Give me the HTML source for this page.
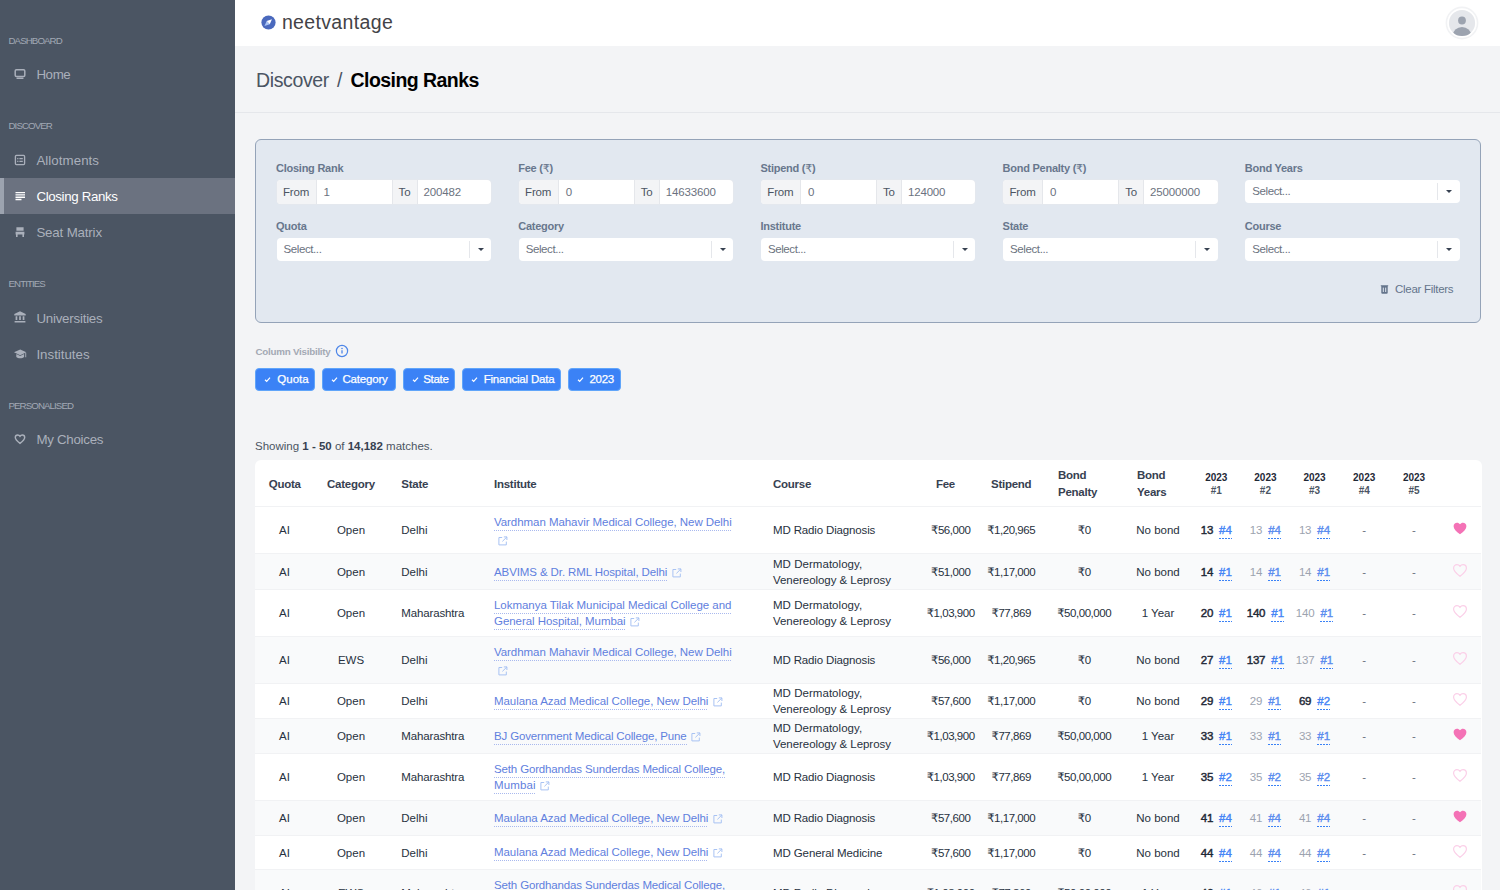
<!DOCTYPE html>
<html lang="en">
<head>
<meta charset="utf-8">
<title>neetvantage - Closing Ranks</title>
<style>
*{box-sizing:border-box;margin:0;padding:0}
html,body{width:1500px;height:890px;overflow:hidden;background:#f3f4f6;font-family:"Liberation Sans","DejaVu Sans",sans-serif;color:#1f2937}
body{position:relative}
svg{display:block}
/* sidebar */
.sb{position:absolute;left:0;top:0;width:235px;height:890px;background:#4b5563}
.sb .lab{position:absolute;left:8.5px;margin-top:1px;font-size:9.7px;color:#a2a9b5;letter-spacing:-.9px;line-height:12px;white-space:nowrap}
.sb .it{position:absolute;left:0;width:235px;height:36px;color:#aab0bb;font-size:13.3px;line-height:38px;padding-left:36.4px;white-space:nowrap}
.sb .it svg{position:absolute;left:14px;top:12px}
.sb .it.on{background:#6b7280;color:#fff;border-left:4px solid #9ca3af;padding-left:32.4px}
.sb .it.on svg{left:10px}
/* topbar */
.tb{position:absolute;left:235px;top:0;width:1265px;height:46px;background:#fff}
.logo{position:absolute;left:46.9px;top:9px;font-size:19.5px;letter-spacing:.35px;line-height:26px;color:#434347;white-space:nowrap}
.logoi{position:absolute;left:26.2px;top:15.100px}
.av{position:absolute;left:1209.9px;top:5.700px}
/* title */
.ttl{position:absolute;left:235px;top:46px;width:1265px;height:67px;border-bottom:1px solid #e5e7eb;background:#f3f4f6}
.ttl div{position:absolute;left:21px;top:21px;font-size:19.5px;line-height:26px;color:#4b5563;white-space:nowrap}
.ttl b{color:#000;position:absolute;left:94.500px;top:0;letter-spacing:-.55px}
.ttl span{letter-spacing:-.36px}
.ttl i{position:absolute;left:81px;top:0;font-style:normal}

/* filters */
.fp{position:absolute;left:255px;top:139px;width:1226px;height:184px;background:#e2e8f0;border:1px solid #94a3b8;border-radius:6px}
.fl{position:absolute;font-size:11px;font-weight:bold;letter-spacing:-.25px;color:#68778d;line-height:14px;white-space:nowrap}
.ig{position:absolute;width:214.6px;height:24px;border-radius:4px;background:#fff;overflow:hidden;font-size:11.5px;line-height:24px;color:#6b7280;white-space:nowrap;box-shadow:0 0 0 .5px #e5e7eb}
.ig i{position:absolute;top:0;height:24px;font-style:normal;letter-spacing:-.15px}
.ig .a{background:#f3f4f6;color:#4b5563;text-align:center;border-right:1px solid #e5e7eb}
.ig .a2{border-left:1px solid #e5e7eb}
.se{position:absolute;width:214.6px;height:23px;border-radius:4px;background:#fff;font-size:11.5px;letter-spacing:-.4px;line-height:23px;color:#6b7280;padding-left:7px;white-space:nowrap}
.se:before{content:"";position:absolute;left:192px;top:3px;width:1px;height:17px;background:#e5e7eb}
.se:after{content:"";position:absolute;left:201px;top:10px;border:3px solid transparent;border-top:3.5px solid #374151;border-bottom:0}
.cf{position:absolute;left:1395px;top:282px;font-size:11.5px;letter-spacing:-.28px;line-height:14px;color:#64748b;white-space:nowrap}
.cfi{position:absolute;left:1380px;top:284px}
/* column visibility */
.cv{position:absolute;left:255.5px;top:346px;font-size:9.8px;font-weight:bold;letter-spacing:-.25px;color:#a3a9b4;line-height:12px;white-space:nowrap}
.cvi{position:absolute;left:334.600px;top:343.500px}
.ch{position:absolute;top:368.3px;-webkit-text-stroke:.25px #fff;height:23px;border-radius:4px;background:#3b82f6;border:1px solid #60a5fa;color:#fff;font-size:11.5px;line-height:21px;white-space:nowrap;padding-left:21px}
.ch svg{position:absolute;left:8px;top:6.700px}
.sh{position:absolute;left:255px;top:438px;font-size:11.5px;line-height:16px;color:#4b5563;white-space:nowrap}
.sh b{color:#374151}
/* table */
.tw{position:absolute;left:255px;top:460px;width:1226.5px;height:460px;background:#fff;border-radius:6px;overflow:hidden;font-size:11.5px;line-height:16px;color:#273140}
.r{position:absolute;left:0;width:1226px;border-top:1px solid #f1f2f4}
.r.e{background:#f9fafb}
.c{position:absolute;top:0;height:100%;padding-top:.6px;display:flex;align-items:center;white-space:nowrap}
.m{justify-content:center;text-align:center}
.hd{font-weight:bold;color:#374151;letter-spacing:-.25px;line-height:16.5px;padding-top:1.6px}
.hd.hy{font-size:10px;line-height:12.6px;color:#1f2937;letter-spacing:0;padding-top:3.6px}
.hy span{color:#4b5563}
.c a{color:#5f80de;text-decoration:none;background:linear-gradient(90deg,#a9b9ee 1px,transparent 1px) 0 100%/2px 1px repeat-x;padding-bottom:3px}
.xl{display:inline-block;vertical-align:-2px;margin-left:4.300px}
.xl.x2{vertical-align:-3.500px;margin-left:4px}
.rk b{color:#1f2937;letter-spacing:-.2px;font-weight:normal;-webkit-text-stroke:.45px #1f2937}
.rk span{position:relative;top:0}
.n{letter-spacing:-.45px}
.in{line-height:16.5px}
.in>div{position:relative;top:-.2px}
.rk.g b{color:#9ca3af;font-weight:normal;-webkit-text-stroke:0}
.rk u{color:#4585f6;font-weight:normal;-webkit-text-stroke:.4px #4585f6;text-decoration:none;margin-left:6px;background:linear-gradient(90deg,#3b82f6 2px,transparent 2px) 0 100%/3px 1px repeat-x;padding-bottom:3px}
.rk.g u{color:#5b8def;-webkit-text-stroke:.4px #5b8def}
.d{color:#6b7280}
.ht{position:absolute;left:1198px}
</style>
</head>
<body>
<div class="sb">
  <div class="lab" style="top:34px">DASHBOARD</div>
  <div class="it" style="top:56px;letter-spacing:-0.37px"><svg width="12" height="12" viewBox="0 0 12 12"><rect x="1.2" y="1.7" width="9.6" height="6.8" rx="1.2" fill="none" stroke="#aab0bb" stroke-width="1.5"/><rect x="2.5" y="9.6" width="7" height="1.4" rx=".5" fill="#aab0bb"/></svg>Home</div>
  <div class="lab" style="top:119px">DISCOVER</div>
  <div class="it" style="top:142px;letter-spacing:0.06px"><svg width="12" height="12" viewBox="0 0 12 12"><rect x="1.4" y="1.4" width="9.2" height="9.2" rx="1" fill="none" stroke="#aab0bb" stroke-width="1.3"/><path d="M3.2 4.6h1.2M5.4 4.6h3.4M3.2 7.4h1.2M5.4 7.4h3.4" stroke="#aab0bb" stroke-width="1.2"/></svg>Allotments</div>
  <div class="it on" style="top:178px;letter-spacing:-0.35px"><svg width="12" height="12" viewBox="0 0 12 12"><path d="M1.5 2.6h9.5M1.5 4.9h9.5M1.5 7.2h9.5M1.5 9.5h6" stroke="#fff" stroke-width="1.4"/></svg>Closing Ranks</div>
  <div class="it" style="top:214px;letter-spacing:-0.16px"><svg width="12" height="12" viewBox="0 0 12 12"><path d="M2.4 1.2h7.2v3.6H2.4zM1.6 5.8h8.8v2.6H1.6zM2 8.4h1.6v2.6H2zM8.4 8.4H10v2.6H8.4z" fill="#aab0bb"/></svg>Seat Matrix</div>
  <div class="lab" style="top:277px">ENTITIES</div>
  <div class="it" style="top:300px;letter-spacing:-0.22px"><svg style="top:11.3px" width="12" height="12" viewBox="0 0 12 12"><path d="M6 .3l5.700 2.800v1.300H.3V3.100zM1.600 5.200h1.700v3.900H1.600zM5.150 5.200h1.700v3.900h-1.700zM8.700 5.200h1.700v3.900H8.700zM.6 9.900h10.800v1.500H.6z" fill="#aab0bb"/></svg>Universities</div>
  <div class="it" style="top:336px;letter-spacing:0px"><svg style="top:12.500px" width="13" height="11" viewBox="0 0 13 11"><path d="M6.200.4l6.200 2.900-6.200 2.900L0 3.300zM2.300 5.100l3.900 1.800 3.900-1.800v2.800c-1.600 1.900-6.200 1.900-7.800 0zM11.300 4.100h.9v4.200h-.9z" fill="#aab0bb"/></svg>Institutes</div>
  <div class="lab" style="top:399px">PERSONALISED</div>
  <div class="it" style="top:421px;letter-spacing:-0.27px"><svg width="12" height="12" viewBox="0 0 12 12"><path d="M6 10.4C3.2 8.2 1.3 6.6 1.3 4.5 1.3 3 2.4 2 3.7 2c.9 0 1.8.5 2.3 1.3C6.500 2.500 7.400 2 8.300 2c1.300 0 2.400 1 2.400 2.500 0 2.100-1.900 3.700-4.700 5.900z" fill="none" stroke="#aab0bb" stroke-width="1.4"/></svg>My Choices</div>
</div>

<div class="tb">
  <svg class="logoi" width="15" height="15" viewBox="0 0 15 15"><circle cx="7.500" cy="7.500" r="7.100" fill="#4a69bd"/><path d="M3.450 11L8.800 9.300 5.700 5.900z" fill="#a9c4f5"/><path d="M10.950 4.200L8.800 9.300 5.700 5.900z" fill="#fff"/></svg>
  <div class="logo">neetvantage</div>
  <svg class="av" width="34" height="34" viewBox="0 0 34 34"><circle cx="17" cy="17" r="15.600" fill="#fff" stroke="#f1f2f4" stroke-width="1.600"/><circle cx="17" cy="17" r="13.100" fill="#e5e7eb"/><clipPath id="avc"><circle cx="17" cy="17" r="13.100"/></clipPath><circle cx="17" cy="14.500" r="3.900" fill="#9ca3af"/><ellipse cx="17" cy="29.500" rx="9.300" ry="8.600" fill="#9ca3af" clip-path="url(#avc)"/></svg>
</div>
<div class="ttl"><div><span>Discover</span><i>/</i><b>Closing Ranks</b></div></div>
<div class="fp"></div>
<div class="fl" style="left:276.0px;top:161px">Closing Rank</div>
<div class="ig" style="left:276.5px;top:179.7px"><i class="a" style="left:0;width:40px">From</i><i style="left:47px">1</i><i class="a a2" style="left:115px;width:26px">To</i><i style="left:147px">200482</i></div>
<div class="fl" style="left:276.0px;top:218.500px">Quota</div>
<div class="se" style="left:276.5px;top:237.7px">Select...</div>
<div class="fl" style="left:518.2px;top:161px">Fee (<span style="font-weight:normal">₹</span>)</div>
<div class="ig" style="left:518.7px;top:179.7px"><i class="a" style="left:0;width:40px">From</i><i style="left:47px">0</i><i class="a a2" style="left:115px;width:26px">To</i><i style="left:147px">14633600</i></div>
<div class="fl" style="left:518.2px;top:218.500px">Category</div>
<div class="se" style="left:518.7px;top:237.7px">Select...</div>
<div class="fl" style="left:760.4px;top:161px">Stipend (<span style="font-weight:normal">₹</span>)</div>
<div class="ig" style="left:760.9px;top:179.7px"><i class="a" style="left:0;width:40px">From</i><i style="left:47px">0</i><i class="a a2" style="left:115px;width:26px">To</i><i style="left:147px">124000</i></div>
<div class="fl" style="left:760.4px;top:218.500px">Institute</div>
<div class="se" style="left:760.9px;top:237.7px">Select...</div>
<div class="fl" style="left:1002.6px;top:161px">Bond Penalty (<span style="font-weight:normal">₹</span>)</div>
<div class="ig" style="left:1003.1px;top:179.7px"><i class="a" style="left:0;width:40px">From</i><i style="left:47px">0</i><i class="a a2" style="left:115px;width:26px">To</i><i style="left:147px">25000000</i></div>
<div class="fl" style="left:1002.6px;top:218.500px">State</div>
<div class="se" style="left:1003.1px;top:237.7px">Select...</div>
<div class="fl" style="left:1244.8px;top:161px">Bond Years</div>
<div class="se" style="left:1245.3px;top:180px">Select...</div>
<div class="fl" style="left:1244.8px;top:218.500px">Course</div>
<div class="se" style="left:1245.3px;top:237.7px">Select...</div>
<svg class="cfi" width="9" height="10" viewBox="0 0 9 10"><path d="M.8 1.200h7.400v1H.8zM1.300 2.200h6.400v6.600a1 1 0 0 1-1 1H2.300a1 1 0 0 1-1-1z" fill="#64748b"/><path d="M3.300 3.600v4.400M5.700 3.600v4.400" stroke="#e2e8f0" stroke-width="1"/></svg>
<div class="cf">Clear Filters</div>
<div class="cv">Column Visibility</div>
<svg class="cvi" width="14" height="14" viewBox="0 0 14 14"><circle cx="7" cy="7" r="5.600" fill="none" stroke="#4d86e8" stroke-width="1.200"/><path d="M7 6.300v3.300" stroke="#4d86e8" stroke-width="1.300"/><circle cx="7" cy="4.500" r=".8" fill="#4d86e8"/></svg>
<div class="ch" style="left:255px;width:60px;padding-left:21.3px;letter-spacing:0px"><svg width="7" height="7" viewBox="0 0 7 7"><path d="M1 3.800l1.700 1.600L6 1.600" fill="none" stroke="#fff" stroke-width="1.200"/></svg>Quota</div>
<div class="ch" style="left:322px;width:74px;padding-left:19.5px;letter-spacing:-0.2px"><svg width="7" height="7" viewBox="0 0 7 7"><path d="M1 3.800l1.700 1.600L6 1.600" fill="none" stroke="#fff" stroke-width="1.200"/></svg>Category</div>
<div class="ch" style="left:402.5px;width:52.5px;padding-left:19.7px;letter-spacing:-0.3px"><svg width="7" height="7" viewBox="0 0 7 7"><path d="M1 3.800l1.700 1.600L6 1.600" fill="none" stroke="#fff" stroke-width="1.200"/></svg>State</div>
<div class="ch" style="left:461.7px;width:99.6px;padding-left:21px;letter-spacing:-.2px"><svg width="7" height="7" viewBox="0 0 7 7"><path d="M1 3.800l1.700 1.600L6 1.600" fill="none" stroke="#fff" stroke-width="1.200"/></svg>Financial Data</div>
<div class="ch" style="left:568px;width:52.5px;padding-left:20.500px;letter-spacing:-.3px"><svg width="7" height="7" viewBox="0 0 7 7"><path d="M1 3.800l1.700 1.600L6 1.600" fill="none" stroke="#fff" stroke-width="1.200"/></svg>2023</div>
<div class="sh">Showing <b>1 - 50</b> of <b>14,182</b> matches.</div>
<!--TABLE-->
<div class="tw">
<div class="r" style="top:0;height:46px;border-top:0">
<div class="c m hd" style="left:-5.3px;width:70px">Quota</div>
<div class="c m hd" style="left:61px;width:70px">Category</div>
<div class="c hd" style="left:146.3px;width:300px">State</div>
<div class="c hd" style="left:239px;width:300px">Institute</div>
<div class="c hd" style="left:518px;width:300px">Course</div>
<div class="c m hd" style="left:655.5px;width:70px">Fee</div>
<div class="c m hd" style="left:721.2px;width:70px">Stipend</div>
<div class="c hd" style="left:803px;width:60px">Bond<br>Penalty</div>
<div class="c hd" style="left:882px;width:60px">Bond<br>Years</div>
<div class="c m hd hy" style="left:937.3px;width:48px"><div>2023<br><span>#1</span></div></div>
<div class="c m hd hy" style="left:986.4px;width:48px"><div>2023<br><span>#2</span></div></div>
<div class="c m hd hy" style="left:1035.5px;width:48px"><div>2023<br><span>#3</span></div></div>
<div class="c m hd hy" style="left:1085.2px;width:48px"><div>2023<br><span>#4</span></div></div>
<div class="c m hd hy" style="left:1135px;width:48px"><div>2023<br><span>#5</span></div></div>
</div>
<div class="r" style="top:46px;height:47px">
<div class="c m" style="left:-5.5px;width:70px">AI</div>
<div class="c m" style="left:61px;width:70px">Open</div>
<div class="c" style="left:146.3px;width:90px">Delhi</div>
<div class="c in" style="left:239px;width:270px"><div><a style="letter-spacing:-0.056px">Vardhman Mahavir Medical College, New Delhi</a><br><svg class="xl x2" width="10" height="10" viewBox="0 0 10 10"><path d="M4.200 1.500H.9v7.400h7.400V5.600M9 .8L4.400 5.400M5.800.9h3.100v3.100" fill="none" stroke="#a8c3f3" stroke-width="1"/></svg></div></div>
<div class="c co" style="left:518px;width:150px"><div><span style="letter-spacing:-0.146px">MD Radio Diagnosis</span></div></div>
<div class="c m n" style="left:660.7px;width:70px">₹56,000</div>
<div class="c m n" style="left:721.2px;width:70px">₹1,20,965</div>
<div class="c m n" style="left:794.2px;width:70px">₹0</div>
<div class="c m" style="left:868px;width:70px">No bond</div>
<div class="c m rk" style="left:937.3px;width:48px"><span><b>13</b><u>#4</u></span></div>
<div class="c m rk g" style="left:986.4px;width:48px"><span><b>13</b><u>#4</u></span></div>
<div class="c m rk g" style="left:1035.5px;width:48px"><span><b>13</b><u>#4</u></span></div>
<div class="c m d" style="left:1085.2px;width:48px">-</div>
<div class="c m d" style="left:1135px;width:48px">-</div>
<svg class="ht" style="top:15.0px" width="14" height="13" viewBox="0 0 14 13"><path d="M7 12.300C3 9.200.6 7 .6 4.200.6 2.200 2.100.7 4 .7c1.200 0 2.300.6 3 1.600C7.700 1.300 8.800.7 10 .7c1.900 0 3.400 1.500 3.400 3.500 0 2.800-2.400 5-6.400 8.100z" fill="#f472b6"/></svg>
</div>
<div class="r e" style="top:93px;height:36px">
<div class="c m" style="left:-5.5px;width:70px">AI</div>
<div class="c m" style="left:61px;width:70px">Open</div>
<div class="c" style="left:146.3px;width:90px">Delhi</div>
<div class="c in" style="left:239px;width:270px;padding-top:1.8px"><div><a style="letter-spacing:-0.103px">ABVIMS &amp; Dr. RML Hospital, Delhi</a><svg class="xl" width="10" height="10" viewBox="0 0 10 10"><path d="M4.200 1.500H.9v7.400h7.400V5.600M9 .8L4.400 5.400M5.800.9h3.100v3.100" fill="none" stroke="#a8c3f3" stroke-width="1"/></svg></div></div>
<div class="c co" style="left:518px;width:150px"><div><span style="letter-spacing:0.038px">MD Dermatology,</span><br><span style="letter-spacing:-0.049px">Venereology &amp; Leprosy</span></div></div>
<div class="c m n" style="left:660.7px;width:70px">₹51,000</div>
<div class="c m n" style="left:721.2px;width:70px">₹1,17,000</div>
<div class="c m n" style="left:794.2px;width:70px">₹0</div>
<div class="c m" style="left:868px;width:70px">No bond</div>
<div class="c m rk" style="left:937.3px;width:48px"><span><b>14</b><u>#1</u></span></div>
<div class="c m rk g" style="left:986.4px;width:48px"><span><b>14</b><u>#1</u></span></div>
<div class="c m rk g" style="left:1035.5px;width:48px"><span><b>14</b><u>#1</u></span></div>
<div class="c m d" style="left:1085.2px;width:48px">-</div>
<div class="c m d" style="left:1135px;width:48px">-</div>
<svg class="ht" style="top:9.5px" width="14" height="13" viewBox="0 0 14 13"><path d="M7 12.300C3 9.200.6 7 .6 4.200.6 2.200 2.100.7 4 .7c1.200 0 2.300.6 3 1.600C7.700 1.300 8.800.7 10 .7c1.900 0 3.400 1.500 3.400 3.500 0 2.800-2.400 5-6.400 8.100z" fill="none" stroke="#fbcfe8" stroke-width="1.200"/></svg>
</div>
<div class="r" style="top:129px;height:47px">
<div class="c m" style="left:-5.5px;width:70px">AI</div>
<div class="c m" style="left:61px;width:70px">Open</div>
<div class="c" style="left:146.3px;width:90px"><span style="letter-spacing:-0.14px">Maharashtra</span></div>
<div class="c in" style="left:239px;width:270px"><div><a style="letter-spacing:-0.038px">Lokmanya Tilak Municipal Medical College and</a><br><a style="letter-spacing:-0.056px">General Hospital, Mumbai</a><svg class="xl" width="10" height="10" viewBox="0 0 10 10"><path d="M4.200 1.500H.9v7.400h7.400V5.600M9 .8L4.400 5.400M5.800.9h3.100v3.100" fill="none" stroke="#a8c3f3" stroke-width="1"/></svg></div></div>
<div class="c co" style="left:518px;width:150px"><div><span style="letter-spacing:0.038px">MD Dermatology,</span><br><span style="letter-spacing:-0.049px">Venereology &amp; Leprosy</span></div></div>
<div class="c m n" style="left:660.7px;width:70px">₹1,03,900</div>
<div class="c m n" style="left:721.2px;width:70px">₹77,869</div>
<div class="c m n" style="left:794.2px;width:70px">₹50,00,000</div>
<div class="c m" style="left:868px;width:70px">1 Year</div>
<div class="c m rk" style="left:937.3px;width:48px"><span><b>20</b><u>#1</u></span></div>
<div class="c m rk" style="left:986.4px;width:48px"><span><b>140</b><u>#1</u></span></div>
<div class="c m rk g" style="left:1035.5px;width:48px"><span><b>140</b><u>#1</u></span></div>
<div class="c m d" style="left:1085.2px;width:48px">-</div>
<div class="c m d" style="left:1135px;width:48px">-</div>
<svg class="ht" style="top:15.0px" width="14" height="13" viewBox="0 0 14 13"><path d="M7 12.300C3 9.200.6 7 .6 4.200.6 2.200 2.100.7 4 .7c1.200 0 2.300.6 3 1.600C7.700 1.300 8.800.7 10 .7c1.900 0 3.400 1.500 3.400 3.500 0 2.800-2.400 5-6.400 8.100z" fill="none" stroke="#fbcfe8" stroke-width="1.200"/></svg>
</div>
<div class="r e" style="top:176px;height:47px">
<div class="c m" style="left:-5.5px;width:70px">AI</div>
<div class="c m" style="left:61px;width:70px">EWS</div>
<div class="c" style="left:146.3px;width:90px">Delhi</div>
<div class="c in" style="left:239px;width:270px"><div><a style="letter-spacing:-0.056px">Vardhman Mahavir Medical College, New Delhi</a><br><svg class="xl x2" width="10" height="10" viewBox="0 0 10 10"><path d="M4.200 1.500H.9v7.400h7.400V5.600M9 .8L4.400 5.400M5.800.9h3.100v3.100" fill="none" stroke="#a8c3f3" stroke-width="1"/></svg></div></div>
<div class="c co" style="left:518px;width:150px"><div><span style="letter-spacing:-0.146px">MD Radio Diagnosis</span></div></div>
<div class="c m n" style="left:660.7px;width:70px">₹56,000</div>
<div class="c m n" style="left:721.2px;width:70px">₹1,20,965</div>
<div class="c m n" style="left:794.2px;width:70px">₹0</div>
<div class="c m" style="left:868px;width:70px">No bond</div>
<div class="c m rk" style="left:937.3px;width:48px"><span><b>27</b><u>#1</u></span></div>
<div class="c m rk" style="left:986.4px;width:48px"><span><b>137</b><u>#1</u></span></div>
<div class="c m rk g" style="left:1035.5px;width:48px"><span><b>137</b><u>#1</u></span></div>
<div class="c m d" style="left:1085.2px;width:48px">-</div>
<div class="c m d" style="left:1135px;width:48px">-</div>
<svg class="ht" style="top:15.0px" width="14" height="13" viewBox="0 0 14 13"><path d="M7 12.300C3 9.200.6 7 .6 4.200.6 2.200 2.100.7 4 .7c1.200 0 2.300.6 3 1.600C7.700 1.300 8.800.7 10 .7c1.900 0 3.400 1.500 3.400 3.500 0 2.800-2.400 5-6.400 8.100z" fill="none" stroke="#fbcfe8" stroke-width="1.200"/></svg>
</div>
<div class="r" style="top:223px;height:35px">
<div class="c m" style="left:-5.5px;width:70px">AI</div>
<div class="c m" style="left:61px;width:70px">Open</div>
<div class="c" style="left:146.3px;width:90px">Delhi</div>
<div class="c in" style="left:239px;width:270px"><div><a style="letter-spacing:-0.062px">Maulana Azad Medical College, New Delhi</a><svg class="xl" width="10" height="10" viewBox="0 0 10 10"><path d="M4.200 1.500H.9v7.400h7.400V5.600M9 .8L4.400 5.400M5.800.9h3.100v3.100" fill="none" stroke="#a8c3f3" stroke-width="1"/></svg></div></div>
<div class="c co" style="left:518px;width:150px"><div><span style="letter-spacing:0.038px">MD Dermatology,</span><br><span style="letter-spacing:-0.049px">Venereology &amp; Leprosy</span></div></div>
<div class="c m n" style="left:660.7px;width:70px">₹57,600</div>
<div class="c m n" style="left:721.2px;width:70px">₹1,17,000</div>
<div class="c m n" style="left:794.2px;width:70px">₹0</div>
<div class="c m" style="left:868px;width:70px">No bond</div>
<div class="c m rk" style="left:937.3px;width:48px"><span><b>29</b><u>#1</u></span></div>
<div class="c m rk g" style="left:986.4px;width:48px"><span><b>29</b><u>#1</u></span></div>
<div class="c m rk" style="left:1035.5px;width:48px"><span><b>69</b><u>#2</u></span></div>
<div class="c m d" style="left:1085.2px;width:48px">-</div>
<div class="c m d" style="left:1135px;width:48px">-</div>
<svg class="ht" style="top:9.0px" width="14" height="13" viewBox="0 0 14 13"><path d="M7 12.300C3 9.200.6 7 .6 4.200.6 2.200 2.100.7 4 .7c1.200 0 2.300.6 3 1.600C7.700 1.300 8.800.7 10 .7c1.900 0 3.400 1.500 3.400 3.500 0 2.800-2.400 5-6.400 8.100z" fill="none" stroke="#fbcfe8" stroke-width="1.200"/></svg>
</div>
<div class="r e" style="top:258px;height:35px">
<div class="c m" style="left:-5.5px;width:70px">AI</div>
<div class="c m" style="left:61px;width:70px">Open</div>
<div class="c" style="left:146.3px;width:90px"><span style="letter-spacing:-0.14px">Maharashtra</span></div>
<div class="c in" style="left:239px;width:270px"><div><a style="letter-spacing:-0.162px">BJ Government Medical College, Pune</a><svg class="xl" width="10" height="10" viewBox="0 0 10 10"><path d="M4.200 1.500H.9v7.400h7.400V5.600M9 .8L4.400 5.400M5.800.9h3.100v3.100" fill="none" stroke="#a8c3f3" stroke-width="1"/></svg></div></div>
<div class="c co" style="left:518px;width:150px"><div><span style="letter-spacing:0.038px">MD Dermatology,</span><br><span style="letter-spacing:-0.049px">Venereology &amp; Leprosy</span></div></div>
<div class="c m n" style="left:660.7px;width:70px">₹1,03,900</div>
<div class="c m n" style="left:721.2px;width:70px">₹77,869</div>
<div class="c m n" style="left:794.2px;width:70px">₹50,00,000</div>
<div class="c m" style="left:868px;width:70px">1 Year</div>
<div class="c m rk" style="left:937.3px;width:48px"><span><b>33</b><u>#1</u></span></div>
<div class="c m rk g" style="left:986.4px;width:48px"><span><b>33</b><u>#1</u></span></div>
<div class="c m rk g" style="left:1035.5px;width:48px"><span><b>33</b><u>#1</u></span></div>
<div class="c m d" style="left:1085.2px;width:48px">-</div>
<div class="c m d" style="left:1135px;width:48px">-</div>
<svg class="ht" style="top:9.0px" width="14" height="13" viewBox="0 0 14 13"><path d="M7 12.300C3 9.200.6 7 .6 4.200.6 2.200 2.100.7 4 .7c1.200 0 2.300.6 3 1.600C7.700 1.300 8.800.7 10 .7c1.900 0 3.400 1.500 3.400 3.500 0 2.800-2.400 5-6.400 8.100z" fill="#f472b6"/></svg>
</div>
<div class="r" style="top:293px;height:47px">
<div class="c m" style="left:-5.5px;width:70px">AI</div>
<div class="c m" style="left:61px;width:70px">Open</div>
<div class="c" style="left:146.3px;width:90px"><span style="letter-spacing:-0.14px">Maharashtra</span></div>
<div class="c in" style="left:239px;width:270px"><div><a style="letter-spacing:-0.145px">Seth Gordhandas Sunderdas Medical College,</a><br><a style="letter-spacing:0.15px">Mumbai</a><svg class="xl" width="10" height="10" viewBox="0 0 10 10"><path d="M4.200 1.500H.9v7.400h7.400V5.600M9 .8L4.400 5.400M5.800.9h3.100v3.100" fill="none" stroke="#a8c3f3" stroke-width="1"/></svg></div></div>
<div class="c co" style="left:518px;width:150px"><div><span style="letter-spacing:-0.146px">MD Radio Diagnosis</span></div></div>
<div class="c m n" style="left:660.7px;width:70px">₹1,03,900</div>
<div class="c m n" style="left:721.2px;width:70px">₹77,869</div>
<div class="c m n" style="left:794.2px;width:70px">₹50,00,000</div>
<div class="c m" style="left:868px;width:70px">1 Year</div>
<div class="c m rk" style="left:937.3px;width:48px"><span><b>35</b><u>#2</u></span></div>
<div class="c m rk g" style="left:986.4px;width:48px"><span><b>35</b><u>#2</u></span></div>
<div class="c m rk g" style="left:1035.5px;width:48px"><span><b>35</b><u>#2</u></span></div>
<div class="c m d" style="left:1085.2px;width:48px">-</div>
<div class="c m d" style="left:1135px;width:48px">-</div>
<svg class="ht" style="top:15.0px" width="14" height="13" viewBox="0 0 14 13"><path d="M7 12.300C3 9.200.6 7 .6 4.200.6 2.200 2.100.7 4 .7c1.200 0 2.300.6 3 1.600C7.700 1.300 8.800.7 10 .7c1.900 0 3.400 1.500 3.400 3.500 0 2.800-2.400 5-6.400 8.100z" fill="none" stroke="#fbcfe8" stroke-width="1.200"/></svg>
</div>
<div class="r e" style="top:340px;height:35px">
<div class="c m" style="left:-5.5px;width:70px">AI</div>
<div class="c m" style="left:61px;width:70px">Open</div>
<div class="c" style="left:146.3px;width:90px">Delhi</div>
<div class="c in" style="left:239px;width:270px"><div><a style="letter-spacing:-0.062px">Maulana Azad Medical College, New Delhi</a><svg class="xl" width="10" height="10" viewBox="0 0 10 10"><path d="M4.200 1.500H.9v7.400h7.400V5.600M9 .8L4.400 5.400M5.800.9h3.100v3.100" fill="none" stroke="#a8c3f3" stroke-width="1"/></svg></div></div>
<div class="c co" style="left:518px;width:150px"><div><span style="letter-spacing:-0.146px">MD Radio Diagnosis</span></div></div>
<div class="c m n" style="left:660.7px;width:70px">₹57,600</div>
<div class="c m n" style="left:721.2px;width:70px">₹1,17,000</div>
<div class="c m n" style="left:794.2px;width:70px">₹0</div>
<div class="c m" style="left:868px;width:70px">No bond</div>
<div class="c m rk" style="left:937.3px;width:48px"><span><b>41</b><u>#4</u></span></div>
<div class="c m rk g" style="left:986.4px;width:48px"><span><b>41</b><u>#4</u></span></div>
<div class="c m rk g" style="left:1035.5px;width:48px"><span><b>41</b><u>#4</u></span></div>
<div class="c m d" style="left:1085.2px;width:48px">-</div>
<div class="c m d" style="left:1135px;width:48px">-</div>
<svg class="ht" style="top:9.0px" width="14" height="13" viewBox="0 0 14 13"><path d="M7 12.300C3 9.200.6 7 .6 4.200.6 2.200 2.100.7 4 .7c1.200 0 2.300.6 3 1.600C7.700 1.300 8.800.7 10 .7c1.900 0 3.400 1.500 3.400 3.500 0 2.800-2.400 5-6.400 8.100z" fill="#f472b6"/></svg>
</div>
<div class="r" style="top:375px;height:34px">
<div class="c m" style="left:-5.5px;width:70px">AI</div>
<div class="c m" style="left:61px;width:70px">Open</div>
<div class="c" style="left:146.3px;width:90px">Delhi</div>
<div class="c in" style="left:239px;width:270px"><div><a style="letter-spacing:-0.062px">Maulana Azad Medical College, New Delhi</a><svg class="xl" width="10" height="10" viewBox="0 0 10 10"><path d="M4.200 1.500H.9v7.400h7.400V5.600M9 .8L4.400 5.400M5.800.9h3.100v3.100" fill="none" stroke="#a8c3f3" stroke-width="1"/></svg></div></div>
<div class="c co" style="left:518px;width:150px"><div><span style="letter-spacing:-0.1px">MD General Medicine</span></div></div>
<div class="c m n" style="left:660.7px;width:70px">₹57,600</div>
<div class="c m n" style="left:721.2px;width:70px">₹1,17,000</div>
<div class="c m n" style="left:794.2px;width:70px">₹0</div>
<div class="c m" style="left:868px;width:70px">No bond</div>
<div class="c m rk" style="left:937.3px;width:48px"><span><b>44</b><u>#4</u></span></div>
<div class="c m rk g" style="left:986.4px;width:48px"><span><b>44</b><u>#4</u></span></div>
<div class="c m rk g" style="left:1035.5px;width:48px"><span><b>44</b><u>#4</u></span></div>
<div class="c m d" style="left:1085.2px;width:48px">-</div>
<div class="c m d" style="left:1135px;width:48px">-</div>
<svg class="ht" style="top:8.5px" width="14" height="13" viewBox="0 0 14 13"><path d="M7 12.300C3 9.200.6 7 .6 4.200.6 2.200 2.100.7 4 .7c1.200 0 2.300.6 3 1.600C7.700 1.300 8.800.7 10 .7c1.900 0 3.400 1.500 3.400 3.500 0 2.800-2.400 5-6.400 8.100z" fill="none" stroke="#fbcfe8" stroke-width="1.200"/></svg>
</div>
<div class="r e" style="top:409px;height:47px">
<div class="c m" style="left:-5.5px;width:70px">AI</div>
<div class="c m" style="left:61px;width:70px">EWS</div>
<div class="c" style="left:146.3px;width:90px"><span style="letter-spacing:-0.14px">Maharashtra</span></div>
<div class="c in" style="left:239px;width:270px"><div><a style="letter-spacing:-0.145px">Seth Gordhandas Sunderdas Medical College,</a><br><a style="letter-spacing:0.15px">Mumbai</a><svg class="xl" width="10" height="10" viewBox="0 0 10 10"><path d="M4.200 1.500H.9v7.400h7.400V5.600M9 .8L4.400 5.400M5.800.9h3.100v3.100" fill="none" stroke="#a8c3f3" stroke-width="1"/></svg></div></div>
<div class="c co" style="left:518px;width:150px"><div><span style="letter-spacing:-0.146px">MD Radio Diagnosis</span></div></div>
<div class="c m n" style="left:660.7px;width:70px">₹1,03,900</div>
<div class="c m n" style="left:721.2px;width:70px">₹77,869</div>
<div class="c m n" style="left:794.2px;width:70px">₹50,00,000</div>
<div class="c m" style="left:868px;width:70px">1 Year</div>
<div class="c m rk" style="left:937.3px;width:48px"><span><b>46</b><u>#1</u></span></div>
<div class="c m rk g" style="left:986.4px;width:48px"><span><b>46</b><u>#1</u></span></div>
<div class="c m rk g" style="left:1035.5px;width:48px"><span><b>46</b><u>#1</u></span></div>
<div class="c m d" style="left:1085.2px;width:48px">-</div>
<div class="c m d" style="left:1135px;width:48px">-</div>
<svg class="ht" style="top:15.0px" width="14" height="13" viewBox="0 0 14 13"><path d="M7 12.300C3 9.200.6 7 .6 4.200.6 2.200 2.100.7 4 .7c1.200 0 2.300.6 3 1.600C7.700 1.300 8.800.7 10 .7c1.900 0 3.400 1.500 3.400 3.500 0 2.800-2.400 5-6.400 8.100z" fill="none" stroke="#fbcfe8" stroke-width="1.200"/></svg>
</div>
</div>
<!--/TABLE-->
</body>
</html>
